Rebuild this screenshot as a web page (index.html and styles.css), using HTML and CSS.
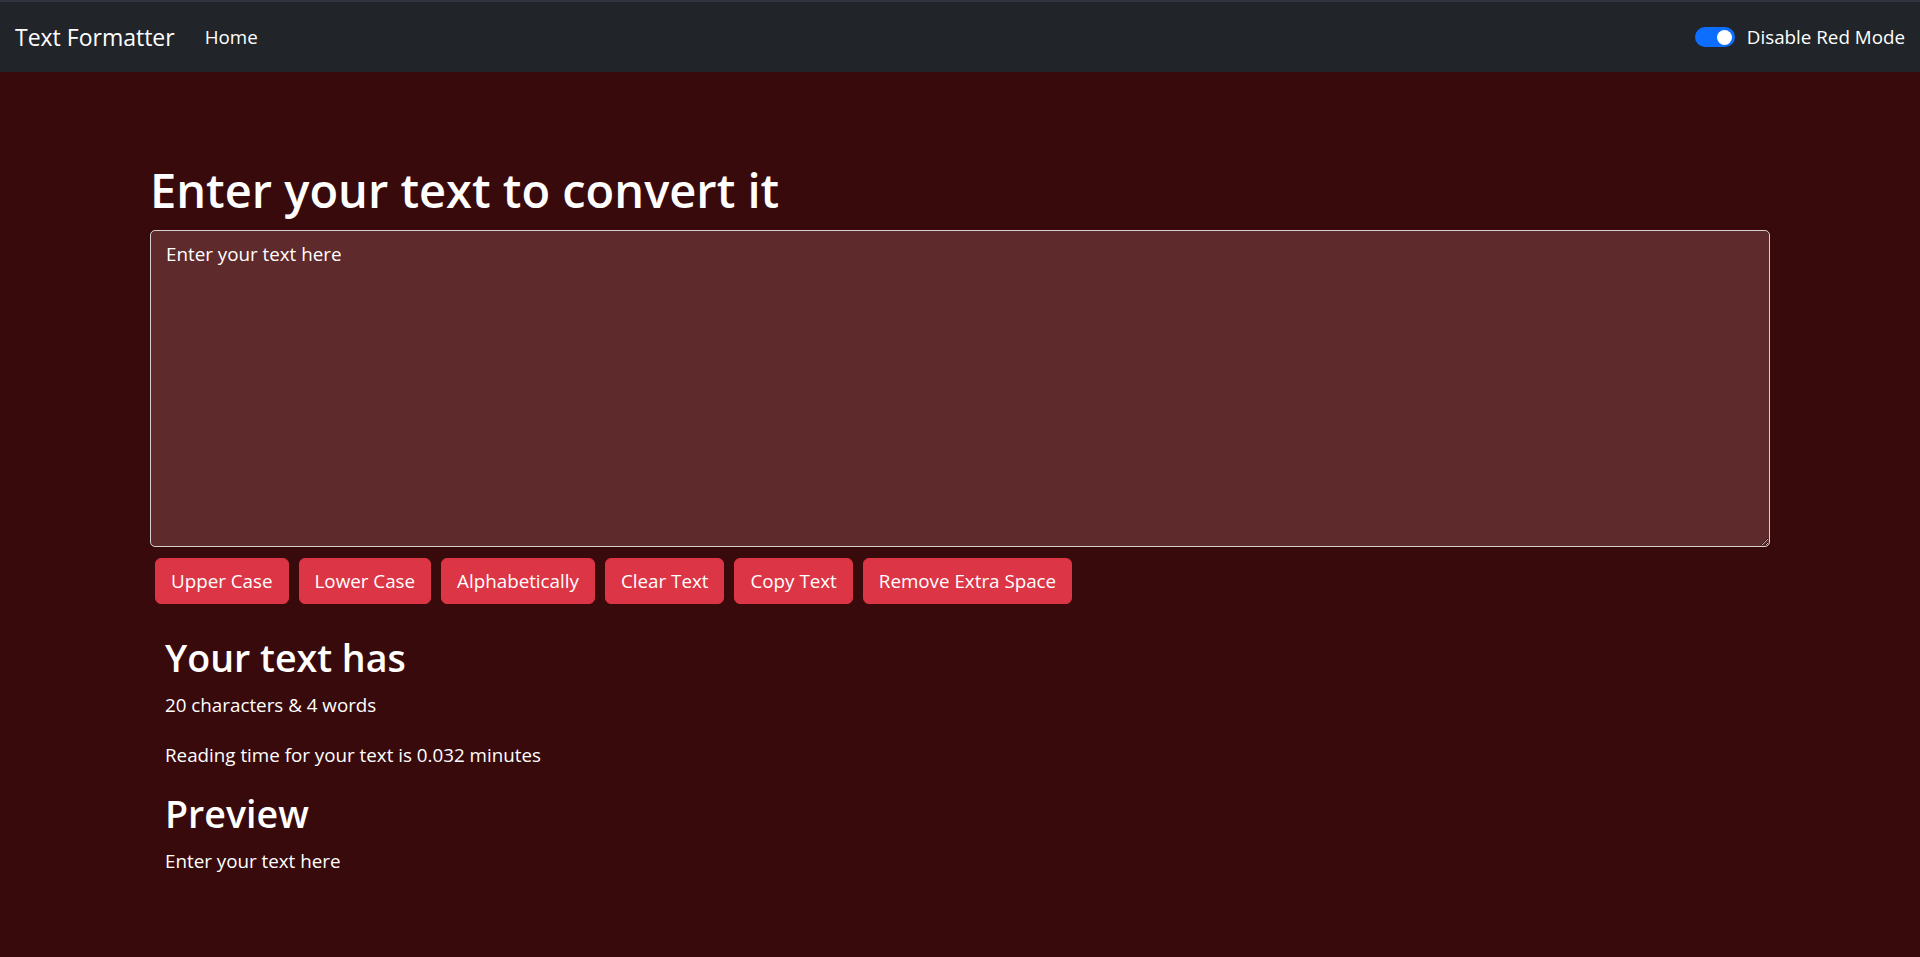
FILE: index.html
```html
<!DOCTYPE html>
<html lang="en">
<head>
<meta charset="utf-8">
<title>Text Formatter</title>
<link rel="stylesheet" href="styles.css">
</head>
<body>
<div class="top-strip"></div>
<nav class="navbar">
  <div class="nav-inner">
    <a class="brand" href="#">Text Formatter</a>
    <ul class="nav-links">
      <li><a class="nav-link" href="#">Home</a></li>
    </ul>
    <div class="switch">
      <span class="switch-track"><span class="switch-knob"></span></span>
      <label class="switch-label">Disable Red Mode</label>
    </div>
  </div>
</nav>
<main class="main">
  <div class="container">
    <h1 class="title">Enter your text to convert it</h1>
    <textarea class="text-input" rows="10">Enter your text here</textarea>
    <div class="btn-row">
      <button class="btn">Upper Case</button>
      <button class="btn">Lower Case</button>
      <button class="btn">Alphabetically</button>
      <button class="btn">Clear Text</button>
      <button class="btn">Copy Text</button>
      <button class="btn">Remove Extra Space</button>
    </div>
    <section class="summary">
      <h2 class="sub-title">Your text has</h2>
      <p class="para">20 characters &amp; 4 words</p>
      <p class="para">Reading time for your text is 0.032 minutes</p>
      <h2 class="sub-title">Preview</h2>
      <p class="para">Enter your text here</p>
    </section>
  </div>
</main>
</body>
</html>
```
FILE: styles.css
```css
* { box-sizing: border-box; }
html, body { margin: 0; padding: 0; }
body {
  min-height: 957px;
  background: #390a0b;
  color: #fff;
  font-family: "Open Sans", "Noto Sans", sans-serif;
  font-size: 18.8px;
  line-height: 30px;
}
.top-strip { height: 2px; background: #33343f; }
.navbar { background: #212529; height: 70px; }
.nav-inner {
  height: 100%;
  display: flex;
  align-items: center;
  padding: 0 15px;
}
.brand {
  color: #fff;
  text-decoration: none;
  font-size: 23px;
  line-height: 37px;
  margin-right: 20px;
}
.nav-links { list-style: none; margin: 0; padding: 0; display: flex; }
.nav-link {
  color: #fff;
  text-decoration: none;
  padding: 10px;
  display: block;
  font-size: 18.8px;
  line-height: 30px;
}
.switch { margin-left: auto; display: flex; align-items: center; }
.switch-track {
  width: 40px;
  height: 20px;
  border-radius: 10px;
  background: #0d6efd;
  display: flex;
  align-items: center;
  justify-content: flex-end;
  padding-right: 2.5px;
  margin-right: 12px;
}
.switch-knob { width: 15px; height: 15px; border-radius: 50%; background: #fff; }
.switch-label { font-size: 18.8px; line-height: 30px; }
.main { padding-top: 88px; }
.container { width: 1650px; margin: 0 auto; padding: 0 15px; }
.title {
  margin: 0 0 10px;
  font-size: 47px;
  font-weight: 600;
  line-height: 60px;
}
.text-input {
  display: block;
  width: 100%;
  height: 317px;
  margin: 0;
  padding: 7.5px 15px;
  background: #5f2a2c;
  color: #fff;
  border: 1px solid #d6d0d0;
  border-radius: 5px;
  font-family: inherit;
  font-size: 18.8px;
  line-height: 30px;
  outline: none;
}
.btn-row { display: flex; flex-wrap: wrap; padding-top: 6px; }
.btn {
  margin: 5px;
  padding: 7px 15px;
  border: 1px solid #dc3545;
  border-radius: 6px;
  background: #dc3545;
  color: #fff;
  font-family: inherit;
  font-size: 18.8px;
  line-height: 30px;
}
.summary { padding: 25px 15px 0; }
.sub-title {
  margin: 0 0 8px;
  font-size: 37.6px;
  font-weight: 600;
  line-height: 48px;
}
.para { margin: 0 0 20px; }
.summary .para:last-child { margin-bottom: 0; }
```
